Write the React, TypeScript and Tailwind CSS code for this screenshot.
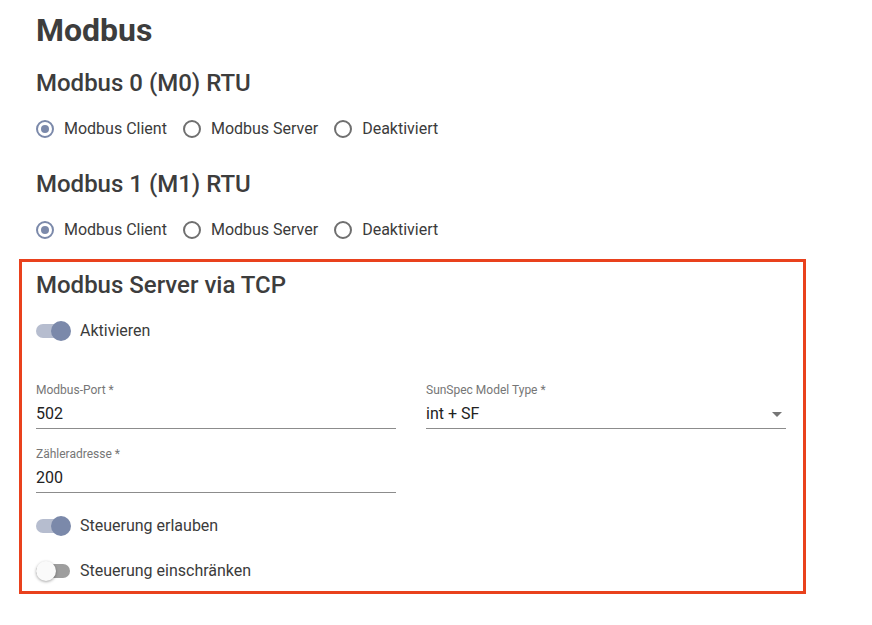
import React from "react";

const font = { fontFamily: "Roboto, 'Liberation Sans', sans-serif" };

function Radio({ checked, label }: { checked?: boolean; label: string }) {
  return (
    <div className="flex items-center gap-[10px]">
      <div
        className={
          "w-[18px] h-[18px] rounded-full border-2 flex items-center justify-center " +
          (checked ? "border-[#7b89aa]" : "border-[#6f6f6f]")
        }
      >
        {checked && <div className="w-[8px] h-[8px] rounded-full bg-[#7b89aa]" />}
      </div>
      <span className="text-[16px] leading-[24px] text-[#3b3b3b]">{label}</span>
    </div>
  );
}

function RadioRow() {
  return (
    <div className="flex items-center gap-[16px] h-[24px]">
      <Radio checked label="Modbus Client" />
      <Radio label="Modbus Server" />
      <Radio label="Deaktiviert" />
    </div>
  );
}

function Toggle({ on, label }: { on?: boolean; label: string }) {
  return (
    <div className="flex items-center h-[24px] gap-[9px]">
      <div className="relative w-[35px] h-[20px] flex items-center">
        <div
          className={
            "w-[34px] h-[14px] rounded-full " + (on ? "bg-[#b6bdcf]" : "bg-[#9e9e9e]")
          }
        />
        <div
          className={
            "absolute top-0 w-[20px] h-[20px] rounded-full " +
            (on
              ? "left-[15px] bg-[#7b89aa]"
              : "left-0 bg-[#fafafa] shadow-[0_1px_3px_rgba(0,0,0,0.35)]")
          }
        />
      </div>
      <span className="text-[16px] leading-[24px] text-[#3b3b3b]">{label}</span>
    </div>
  );
}

function Field({ label, value, select }: { label: string; value: string; select?: boolean }) {
  return (
    <div className="flex flex-col">
      <span className="text-[12px] leading-[16px] text-[#767676]">{label}</span>
      <div className="mt-[4px] flex items-center justify-between pb-[2px] border-b border-[#8c8c8c]">
        <span className="text-[16px] leading-[24px] text-[#222]">{value}</span>
        {select && (
          <svg width="10" height="5" viewBox="0 0 10 5" className="mr-[4px]">
            <path d="M0 0 L10 0 L5 5 Z" fill="#757575" />
          </svg>
        )}
      </div>
    </div>
  );
}

export default function App() {
  return (
    <div className="bg-white w-[872px] h-[625px] pl-[19px]" style={font}>
      <div className="pl-[17px] pt-[10px]">
        <h1 className="text-[32px] leading-[40px] font-bold text-[#3d3d3d]">Modbus</h1>
        <h2 className="mt-[18px] text-[24px] leading-[30px] font-medium text-[#3d3d3d]">
          Modbus 0 (M0) RTU
        </h2>
        <div className="mt-[19px]">
          <RadioRow />
        </div>
        <h2 className="mt-[28px] text-[24px] leading-[30px] font-medium text-[#3d3d3d]">
          Modbus 1 (M1) RTU
        </h2>
        <div className="mt-[19px]">
          <RadioRow />
        </div>
      </div>
      <div className="mt-[17px] w-[787px] border-[3px] border-[#e9411d] pl-[14px] pr-[17px] pt-[8px] pb-[8px]">
        <h2 className="text-[24px] leading-[30px] font-medium text-[#3d3d3d]">
          Modbus Server via TCP
        </h2>
        <div className="mt-[19px]">
          <Toggle on label="Aktivieren" />
        </div>
        <div className="mt-[39px] grid grid-cols-2 gap-x-[30px]">
          <Field label="Modbus-Port *" value="502" />
          <Field label="SunSpec Model Type *" value="int + SF" select />
        </div>
        <div className="mt-[17px] grid grid-cols-2 gap-x-[30px]">
          <Field label="Zähleradresse *" value="200" />
        </div>
        <div className="mt-[21px]">
          <Toggle on label="Steuerung erlauben" />
        </div>
        <div className="mt-[21px]">
          <Toggle label="Steuerung einschränken" />
        </div>
      </div>
    </div>
  );
}
